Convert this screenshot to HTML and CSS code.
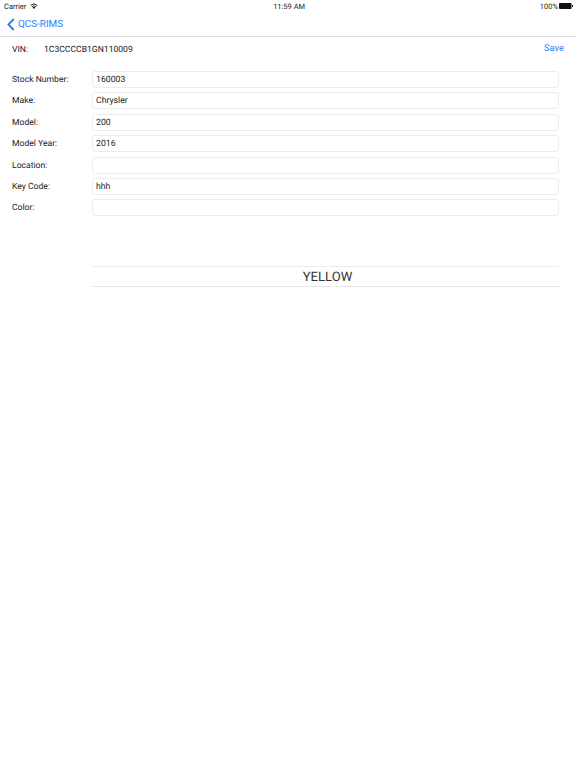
FILE: index.html
```html
<!DOCTYPE html>
<html lang="en">
<head>
<meta charset="utf-8">
<title>QCS-RIMS</title>
<link rel="stylesheet" href="styles.css">
</head>
<body>
<div class="status">
  <div class="status-left">Carrier
    <svg class="wifi" width="8" height="6" viewBox="0 0 16 12"><path d="M8 12 L5.2 8.8 A4.2 4.2 0 0 1 10.8 8.8 Z" fill="#111"/><path d="M3.4 6.8 A7 7 0 0 1 12.6 6.8 L11.4 8.2 A5.2 5.2 0 0 0 4.6 8.2 Z" fill="#111"/><path d="M1 4.2 A10.5 10.5 0 0 1 15 4.2 L13.7 5.7 A8.6 8.6 0 0 0 2.3 5.7 Z" fill="#111"/></svg>
  </div>
  <div class="status-time">11:59 AM</div>
  <div class="status-right">100%
    <svg class="battery" width="14" height="6" viewBox="0 0 14 6"><rect x="0" y="0" width="12.5" height="6" rx="1" fill="#111"/><rect x="13" y="2" width="1" height="2" fill="#111"/></svg>
  </div>
</div>
<nav class="nav">
  <svg class="chev" width="8" height="13" viewBox="0 0 8 13"><path d="M6.8 1 L1.4 6.5 L6.8 12" fill="none" stroke="#1a82fb" stroke-width="1.8"/></svg>
  <span class="back">QCS-RIMS</span>
</nav>
<main class="content">
  <div class="vin-row">
    <span class="vin-label">VIN:</span>
    <span class="vin-value">1C3CCCCB1GN110009</span>
    <span class="save">Save</span>
  </div>
  <form class="form">
    <div class="row"><label class="label">Stock Number:</label><div class="input">160003</div></div>
    <div class="row"><label class="label">Make:</label><div class="input">Chrysler</div></div>
    <div class="row"><label class="label">Model:</label><div class="input">200</div></div>
    <div class="row"><label class="label">Model Year:</label><div class="input">2016</div></div>
    <div class="row"><label class="label">Location:</label><div class="input"></div></div>
    <div class="row"><label class="label">Key Code:</label><div class="input">hhh</div></div>
    <div class="row"><label class="label">Color:</label><div class="input"></div></div>
  </form>
  <div class="picker">YELLOW</div>
</main>
</body>
</html>
```
FILE: styles.css
```css
* { box-sizing: border-box; }
html, body { margin: 0; padding: 0; background: #fff; }
body {
  width: 576px;
  height: 768px;
  overflow: hidden;
  font-family: Roboto, "Liberation Sans", Arial, sans-serif;
  color: #222;
  text-rendering: geometricPrecision;
}
.status {
  height: 12px;
  display: flex;
  justify-content: space-between;
  align-items: center;
  padding: 0 3px 0 4px;
  font-size: 7.5px;
  color: #222;
}
.status-left, .status-right { display: flex; align-items: center; gap: 4px; }
.status-right { gap: 1px; }
.status-time { font-size: 7.5px; }
.nav {
  height: 24px;
  display: flex;
  align-items: center;
  padding-left: 7px;
  gap: 3px;
  border-bottom: 1px solid #dcdcdc;
  box-sizing: content-box;
}
.back { color: #1a82fb; font-size: 9.9px; }
.content { padding: 0 17px 0 12px; }
.vin-row {
  display: flex;
  align-items: center;
  height: 24px;
  font-size: 8.6px;
}
.vin-label { width: 32px; padding-top: 2px; }
.vin-value { flex: 1; padding-top: 2px; }
.save { color: #1a82fb; font-size: 9.4px; margin-right: -5px; margin-top: -2px; }
.form {
  margin-top: 10px;
  display: flex;
  flex-direction: column;
  gap: 4.4px;
}
.row { display: flex; align-items: center; height: 17px; font-size: 8.6px; }
.label { width: 80px; padding-top: 1px; }
.input {
  flex: 1;
  height: 17px;
  border: 1px solid #ececec;
  border-radius: 3px;
  padding: 1px 0 0 3px;
  line-height: 14px;
  font-size: 8.7px;
}
.picker {
  margin: 50px 0 0 80px;
  padding-left: 4px;
  height: 21px;
  border-top: 1px solid #ececec;
  border-bottom: 1px solid #e6e6e6;
  text-align: center;
  font-size: 13.1px;
  line-height: 21px;
  color: #333;
}
```
